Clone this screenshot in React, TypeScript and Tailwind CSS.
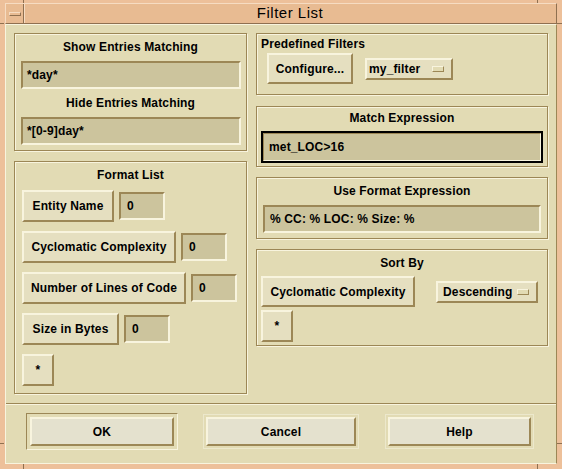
import React from 'react';

const raised =
  'border-2 border-t-[#f8f4de] border-l-[#f8f4de] border-r-[#9c8756] border-b-[#9c8756]';
const sunken =
  'border-2 border-t-[#9c8756] border-l-[#9c8756] border-r-[#f8f4de] border-b-[#f8f4de]';
const group =
  'border border-[#9c8756] shadow-[inset_1px_1px_0_#f8f4de,1px_1px_0_#f8f4de] flex flex-col';

function Btn({ className, children }: { className: string; children: React.ReactNode }) {
  return (
    <div className={`${raised} bg-[#e5dfc0] flex items-center justify-center shrink-0 ${className}`}>
      {children}
    </div>
  );
}

function Field({ className, children }: { className: string; children: React.ReactNode }) {
  return (
    <div className={`${sunken} bg-[#ccc49d] h-[28px] flex items-center shrink-0 ${className}`}>
      {children}
    </div>
  );
}

function OptionMenu({ className, label }: { className: string; label: string }) {
  return (
    <div className={`${raised} bg-[#e5dfc0] h-[22px] flex items-center justify-between shrink-0 ${className}`}>
      <span>{label}</span>
      <span className="w-[12px] h-[6px] border border-t-[#f8f4de] border-l-[#f8f4de] border-r-[#9c8756] border-b-[#9c8756] bg-[#e2dbb4]" />
    </div>
  );
}

function Title({ className, children }: { className: string; children: React.ReactNode }) {
  return <div className={`h-[14px] leading-[14px] ${className}`}>{children}</div>;
}

const formatRows = [
  { label: 'Entity Name', w: 'w-[92px]' },
  { label: 'Cyclomatic Complexity', w: 'w-[154px]' },
  { label: 'Number of Lines of Code', w: 'w-[164px]' },
  { label: 'Size in Bytes', w: 'w-[97px]' },
];

export default function App() {
  return (
    <div className="relative w-[562px] h-[469px] bg-[#edc09a] pt-[3px] px-[5px] pb-[5px] flex flex-col font-['Liberation_Sans',Arial,sans-serif] text-[12px] font-bold tracking-[0.15px] text-black">
      {/* frame corner ticks */}
      <span className="absolute left-[23px] top-0 w-px h-[3px] bg-[#8f7050]" />
      <span className="absolute left-[537px] top-0 w-px h-[3px] bg-[#8f7050]" />
      <span className="absolute left-[23px] bottom-0 w-px h-[5px] bg-[#8f7050]" />
      <span className="absolute left-[537px] bottom-0 w-px h-[5px] bg-[#8f7050]" />
      <span className="absolute left-0 top-[23px] w-[4px] h-px bg-[#8f7050]" />
      <span className="absolute right-0 top-[23px] w-[5px] h-px bg-[#8f7050]" />
      <span className="absolute left-0 top-[443px] w-[4px] h-px bg-[#8f7050]" />
      <span className="absolute right-0 top-[443px] w-[5px] h-px bg-[#8f7050]" />

      {/* title bar */}
      <div className="h-[21px] flex bg-[#e8bb92] border border-t-[#f6dcc2] border-l-[#f6dcc2] border-r-[#8f7050] border-b-[#8f7050] shrink-0">
        <div className="w-[18px] h-full flex items-center justify-center border-r border-r-[#8f7050] shadow-[1px_0_0_#f6dcc2]">
          <span className="w-[12px] h-[4px] border border-t-[#f6dcc2] border-l-[#f6dcc2] border-r-[#8f7050] border-b-[#8f7050]" />
        </div>
        <div className="flex-1 flex items-center justify-center font-normal text-[15px] tracking-[0.5px]">
          Filter List
        </div>
      </div>

      {/* body */}
      <div className="flex-1 flex flex-col bg-[#e2dbb4] border border-t-[#f8f4de] border-l-[#f8f4de] border-r-[#9c8756] border-b-[#f8f4de]">
        <div className="h-[378px] flex pt-[8px] pl-[8px] gap-[9px] shrink-0">
          {/* left column */}
          <div className="w-[233px] flex flex-col gap-[10px]">
            <div className={`${group} h-[118px]`}>
              <Title className="mt-[6px] text-center">Show Entries Matching</Title>
              <Field className="mt-[7px] ml-[6px] w-[220px] pl-[4px]">*day*</Field>
              <Title className="mt-[7px] text-center">Hide Entries Matching</Title>
              <Field className="mt-[7px] ml-[6px] w-[220px] pl-[4px]">*[0-9]day*</Field>
            </div>
            <div className={`${group} h-[233px]`}>
              <Title className="mt-[6px] text-center">Format List</Title>
              <div className="mt-[8px] ml-[7px] flex flex-col gap-[9px]">
                {formatRows.map((r) => (
                  <div key={r.label} className="flex items-center h-[32px]">
                    <Btn className={`${r.w} h-[32px]`}>{r.label}</Btn>
                    <Field className="ml-[5px] w-[46px] pl-[6px]">0</Field>
                  </div>
                ))}
                <Btn className="w-[32px] h-[32px]">*</Btn>
              </div>
            </div>
          </div>

          {/* right column */}
          <div className="w-[292px] flex flex-col">
            <div className={`${group} h-[62px]`}>
              <Title className="mt-[3px] pl-[4px]">Predefined Filters</Title>
              <div className="mt-[2px] ml-[10px] flex items-center h-[31px]">
                <Btn className="w-[86px] h-[31px]">Configure...</Btn>
                <OptionMenu className="ml-[12px] w-[88px] pl-[2px] pr-[7px]" label="my_filter" />
              </div>
            </div>
            <div className={`${group} h-[61px] mt-[11px]`}>
              <Title className="mt-[4px] text-center">Match Expression</Title>
              <div className="mt-[6px] ml-[4px] w-[282px] h-[32px] border-2 border-black">
                <div className="h-full bg-[#ccc49d] border border-t-[#9c8756] border-l-[#9c8756] border-r-[#f8f4de] border-b-[#f8f4de] flex items-center pl-[5px]">
                  met_LOC&gt;16
                </div>
              </div>
            </div>
            <div className={`${group} h-[62px] mt-[10px]`}>
              <Title className="mt-[6px] text-center">Use Format Expression</Title>
              <Field className="mt-[7px] ml-[6px] w-[278px] pl-[5px]">% CC: % LOC: % Size: %</Field>
            </div>
            <div className={`${group} h-[97px] mt-[10px]`}>
              <Title className="mt-[6px] text-center">Sort By</Title>
              <div className="mt-[6px] ml-[4px] flex items-center h-[31px]">
                <Btn className="w-[154px] h-[31px]">Cyclomatic Complexity</Btn>
                <OptionMenu className="ml-[21px] w-[102px] pl-[5px] pr-[7px]" label="Descending" />
              </div>
              <Btn className="mt-[3px] ml-[4px] w-[32px] h-[32px]">*</Btn>
            </div>
          </div>
        </div>

        {/* separator */}
        <div className="h-px bg-[#9c8756] shrink-0" />
        <div className="h-px bg-[#f8f4de] shrink-0" />

        {/* action buttons */}
        <div className="mt-[8px] flex items-center">
          <div className="ml-[20px] p-[3px] border border-t-[#9c8756] border-l-[#9c8756] border-r-[#f8f4de] border-b-[#f8f4de]">
            <div className={`${raised} bg-[#e4e1ce] w-[144px] h-[29px] flex items-center justify-center`}>OK</div>
          </div>
          <div className="ml-[25px] p-[2px] border border-[#ece8cc]">
            <div className={`${raised} bg-[#e4e1ce] w-[150px] h-[29px] flex items-center justify-center`}>Cancel</div>
          </div>
          <div className="ml-[26px] p-[2px] border border-[#ece8cc]">
            <div className={`${raised} bg-[#e4e1ce] w-[143px] h-[29px] flex items-center justify-center`}>Help</div>
          </div>
        </div>
      </div>
    </div>
  );
}
